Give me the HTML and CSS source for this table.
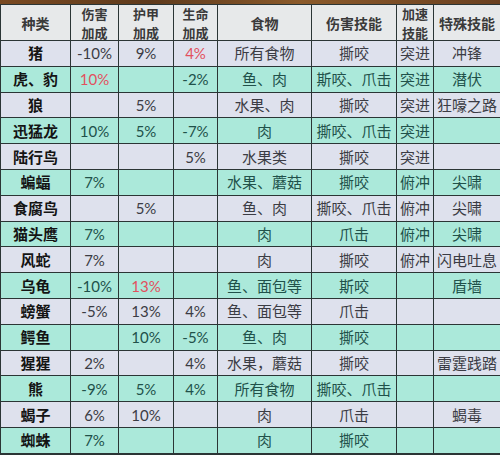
FILE: index.html
```html
<!DOCTYPE html>
<html lang="zh">
<head>
<meta charset="utf-8">
<title>种类加成表</title>
<link rel="stylesheet" href="styles.css">
</head>
<body>
<div class="topbar"></div>
<div class="grid">
  <div class="row head">
    <div class="c name">种类</div>
    <div class="c two"><span>伤害</span><span>加成</span></div>
    <div class="c two"><span>护甲</span><span>加成</span></div>
    <div class="c two"><span>生命</span><span>加成</span></div>
    <div class="c">食物</div>
    <div class="c">伤害技能</div>
    <div class="c two"><span>加速</span><span>技能</span></div>
    <div class="c">特殊技能</div>
  </div>
  <div class="row a">
    <div class="c name">猪</div><div class="c n">-10%</div><div class="c n">9%</div><div class="c n red">4%</div>
    <div class="c">所有食物</div><div class="c">撕咬</div><div class="c">突进</div><div class="c">冲锋</div>
  </div>
  <div class="row b">
    <div class="c name">虎、豹</div><div class="c n red">10%</div><div class="c n"></div><div class="c n">-2%</div>
    <div class="c">鱼、肉</div><div class="c">斯咬、爪击</div><div class="c">突进</div><div class="c">潜伏</div>
  </div>
  <div class="row a">
    <div class="c name">狼</div><div class="c n"></div><div class="c n">5%</div><div class="c n"></div>
    <div class="c">水果、肉</div><div class="c">撕咬</div><div class="c">突进</div><div class="c">狂嚎之路</div>
  </div>
  <div class="row b">
    <div class="c name">迅猛龙</div><div class="c n">10%</div><div class="c n">5%</div><div class="c n">-7%</div>
    <div class="c">肉</div><div class="c">撕咬、爪击</div><div class="c">突进</div><div class="c"></div>
  </div>
  <div class="row a">
    <div class="c name">陆行鸟</div><div class="c n"></div><div class="c n"></div><div class="c n">5%</div>
    <div class="c">水果类</div><div class="c">撕咬</div><div class="c">突进</div><div class="c"></div>
  </div>
  <div class="row b">
    <div class="c name">蝙蝠</div><div class="c n">7%</div><div class="c n"></div><div class="c n"></div>
    <div class="c">水果、蘑菇</div><div class="c">撕咬</div><div class="c">俯冲</div><div class="c">尖啸</div>
  </div>
  <div class="row a">
    <div class="c name">食腐鸟</div><div class="c n"></div><div class="c n">5%</div><div class="c n"></div>
    <div class="c">鱼、肉</div><div class="c">撕咬、爪击</div><div class="c">俯冲</div><div class="c">尖啸</div>
  </div>
  <div class="row b">
    <div class="c name">猫头鹰</div><div class="c n">7%</div><div class="c n"></div><div class="c n"></div>
    <div class="c">肉</div><div class="c">爪击</div><div class="c">俯冲</div><div class="c">尖啸</div>
  </div>
  <div class="row a">
    <div class="c name">风蛇</div><div class="c n">7%</div><div class="c n"></div><div class="c n"></div>
    <div class="c">肉</div><div class="c">撕咬</div><div class="c">俯冲</div><div class="c">闪电吐息</div>
  </div>
  <div class="row b">
    <div class="c name">乌龟</div><div class="c n">-10%</div><div class="c n red">13%</div><div class="c n"></div>
    <div class="c">鱼、面包等</div><div class="c">斯咬</div><div class="c"></div><div class="c">盾墙</div>
  </div>
  <div class="row a">
    <div class="c name">螃蟹</div><div class="c n">-5%</div><div class="c n">13%</div><div class="c n">4%</div>
    <div class="c">鱼、面包等</div><div class="c">爪击</div><div class="c"></div><div class="c"></div>
  </div>
  <div class="row b">
    <div class="c name">鳄鱼</div><div class="c n"></div><div class="c n">10%</div><div class="c n">-5%</div>
    <div class="c">鱼、肉</div><div class="c">撕咬</div><div class="c"></div><div class="c"></div>
  </div>
  <div class="row a">
    <div class="c name">猩猩</div><div class="c n">2%</div><div class="c n"></div><div class="c n">4%</div>
    <div class="c">水果，蘑菇</div><div class="c">撕咬</div><div class="c"></div><div class="c">雷霆践踏</div>
  </div>
  <div class="row b">
    <div class="c name">熊</div><div class="c n">-9%</div><div class="c n">5%</div><div class="c n">4%</div>
    <div class="c">所有食物</div><div class="c">撕咬、爪击</div><div class="c"></div><div class="c"></div>
  </div>
  <div class="row a">
    <div class="c name">蝎子</div><div class="c n">6%</div><div class="c n">10%</div><div class="c n"></div>
    <div class="c">肉</div><div class="c">爪击</div><div class="c"></div><div class="c">蝎毒</div>
  </div>
  <div class="row b">
    <div class="c name">蜘蛛</div><div class="c n">7%</div><div class="c n"></div><div class="c n"></div>
    <div class="c">肉</div><div class="c">撕咬</div><div class="c"></div><div class="c"></div>
  </div>
</div>
</body>
</html>
```
FILE: styles.css
```css
html, body {
  margin: 0;
  padding: 0;
  background: #2b3535;
  overflow: hidden;
}
body {
  width: 500px;
  height: 455px;
  font-family: "Noto Sans CJK SC", "Noto Sans", sans-serif;
}
.topbar {
  height: 4px;
  background: linear-gradient(90deg, #7a4a22 0%, #5e3a1c 30%, #8b5a2b 60%, #6a4020 100%);
}
.grid {
  display: grid;
  grid-template-columns: 69px 47px 54px 43px 93px 84px 36px 66px;
  grid-template-rows: 35px repeat(16, 24.8px);
  gap: 1px;
  padding: 1px 0 0 1px;
  background: #2b3535;
}
.row {
  display: contents;
}
.c {
  display: flex;
  align-items: center;
  justify-content: center;
  text-align: center;
  font-size: 15px;
  line-height: 18px;
  white-space: nowrap;
  overflow: hidden;
}
.head .c {
  background: #e7e9ea;
  color: #3a3a3a;
  font-size: 14px;
  font-weight: 700;
  line-height: 18px;
}
.head .c.two {
  flex-direction: column;
  font-size: 13px;
  line-height: 19px;
  overflow: visible;
  padding-top: 1px;
}
.two span {
  display: block;
  height: 19px;
}
.a .c {
  background: #dee1ed;
  color: #3b3c44;
}
.b .c {
  background: #abe9da;
  color: #21514a;
}
.c.name {
  font-weight: 700;
  color: #141414;
}
.head .c.name {
  color: #3a3a3a;
}
.a .c.name, .b .c.name {
  color: #141414;
}
.c.n {
  font-family: "Lato", "Liberation Sans", sans-serif;
  font-size: 15px;
}
.a .c.red, .b .c.red {
  color: #e2505e;
}
```
